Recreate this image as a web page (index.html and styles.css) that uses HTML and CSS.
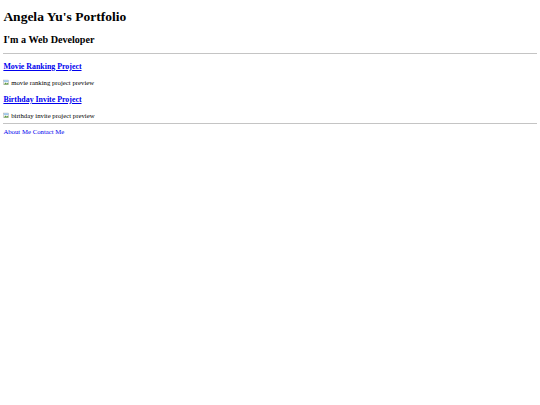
FILE: index.html
```html
<!DOCTYPE html>
<html lang="en">
<head>
    <meta charset="UTF-8">
    <title>Angela's Personal Site</title>
    <link rel="stylesheet" href="styles.css">
</head>
<body>
    <h1>Angela Yu's Portfolio</h1>
    <h2>I'm a Web Developer</h2>
    <hr>

    <h3><a href="#">Movie Ranking Project</a></h3>
    <div class="preview">
        <svg class="broken" viewBox="0 0 16 16"><rect x="1.5" y="2.5" width="12" height="11" fill="#f4f4f4" stroke="#9a9a9a"/><path d="M2 13 L6 8 L9 11 L11 9 L13 12 L13 13 Z" fill="#5b9a3b"/><rect x="2" y="3" width="11" height="4" fill="#9cc7ec"/></svg>movie ranking project preview
    </div>

    <h3><a href="#">Birthday Invite Project</a></h3>
    <div class="preview">
        <svg class="broken" viewBox="0 0 16 16"><rect x="1.5" y="2.5" width="12" height="11" fill="#f4f4f4" stroke="#9a9a9a"/><path d="M2 13 L6 8 L9 11 L11 9 L13 12 L13 13 Z" fill="#5b9a3b"/><rect x="2" y="3" width="11" height="4" fill="#9cc7ec"/></svg>birthday invite project preview
    </div>
    <hr>

    <a href="#">About Me</a>
    <a href="#">Contact Me</a>
</body>
</html>
```

FILE: styles.css
```css
/* page is shown at 540/1280 of its normal size */
body {
    margin: 3.375px;
    font-family: "Liberation Serif", "Times New Roman", serif;
    font-size: 6.75px;
    color: #000;
}

h1 {
    font-size: 2em;
    margin: 6px 0 0.67em;
}

h2 {
    font-size: 1.5em;
    margin: 0.83em 0 0.75em;
}

h3 {
    font-size: 1.17em;
    margin: 1em 0;
}

a {
    color: #0000ee;
}

hr {
    margin: 0.5em 0 0.65em;
    border: none;
    border-top: 1px solid #c4c4c4;
    height: 0;
}

.preview {
    display: flex;
    align-items: center;
    height: 8px;
}

.broken {
    width: 6.75px;
    height: 6.75px;
    margin-right: 1px;
}
```
